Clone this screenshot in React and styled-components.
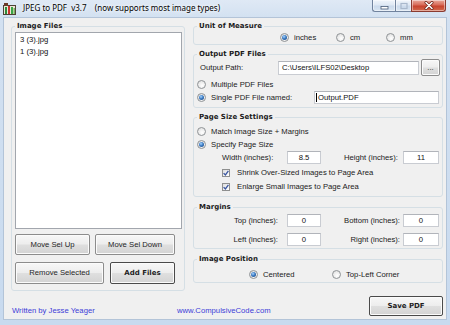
import React from "react";
import styled, { createGlobalStyle } from "styled-components";

const GlobalStyle = createGlobalStyle`
  html, body { margin: 0; padding: 0; background: #c9dbef; }
  body { font-family: "Liberation Sans", Arial, sans-serif; }
  * { box-sizing: border-box; }
`;

const Window = styled.div`
  width: 450px;
  height: 325px;
  display: flex;
  flex-direction: column;
  background: linear-gradient(180deg, #dfe9f5 0px, #d3e1f1 17px, #c8daef 100%);
  overflow: hidden;
`;

const TitleBar = styled.div`
  height: 17px;
  flex: none;
  display: flex;
  align-items: flex-start;
`;

const AppIcon = styled.svg`
  flex: none;
  margin: 3px 0 0 3px;
`;

const TitleText = styled.div`
  margin: 2px 0 0 7px;
  font-family: "Noto Sans", "Open Sans", sans-serif;
  font-size: 8px;
  line-height: 12px;
  color: #000;
  white-space: pre;
  text-shadow: 0 0 3px #fff, 0 0 5px #fff;
`;

const CaptionGroup = styled.div`
  margin-left: auto;
  margin-right: 4px;
  display: flex;
  height: 12px;
`;

const CapBtn = styled.div`
  width: ${(p) => p.$w}px;
  height: 12px;
  display: flex;
  align-items: center;
  justify-content: center;
  border: 1px solid ${(p) => (p.$close ? "#8a3b30" : "#71839e")};
  border-top: none;
  ${(p) => (p.$first ? "border-bottom-left-radius: 3px;" : "")}
  ${(p) => (p.$last ? "border-bottom-right-radius: 3px;" : "")}
  ${(p) => (p.$close ? "" : "border-right: none;")}
  background: ${(p) =>
    p.$close
      ? "linear-gradient(180deg, #e9aa9c 0%, #d86b58 45%, #c7432d 55%, #d36b4e 100%)"
      : "linear-gradient(180deg, #f0f5fb 0%, #dfe8f4 45%, #cbdaec 55%, #d9e5f2 100%)"};
  box-shadow: inset 0 0 0 1px rgba(255, 255, 255, 0.45);
`;

const Client = styled.div`
  flex: 1;
  margin: 0 3px 5px 3px;
  background: #f0f0f0;
  border: 1px solid #b3c4d8;
  display: grid;
  grid-template-columns: 174px 250px;
  grid-template-rows: 270px 1fr;
  column-gap: 8px;
  padding: 3px 3px 0 7px;
`;

const Group = styled.fieldset`
  margin: ${(p) => p.$mt || 0}px 0 0 0;
  padding: 0 ${(p) => (p.$pr === undefined ? 3 : p.$pr)}px 0 3px;
  height: ${(p) => p.$h}px;
  min-width: 0;
  border: 1px solid #d5dfe5;
  border-radius: 3px;
  display: flex;
  flex-direction: column;
  flex: none;
`;

const Legend = styled.legend`
  padding: 0 2px;
  margin: 0;
  font-family: "DejaVu Sans", Verdana, sans-serif;
  font-weight: bold;
  font-size: 7px;
  line-height: 10px;
  color: #1b1b1b;
`;

const ListBox = styled.div`
  margin-top: 1px;
  height: 197px;
  flex: none;
  background: #fff;
  border: 1px solid #a2a6ad;
  padding: 1px 0 0 4px;
`;

const ListItem = styled.div`
  font-size: 7.7px;
  line-height: 12px;
  color: #111;
`;

const Row = styled.div`
  display: flex;
  align-items: center;
  flex: none;
  margin-top: ${(p) => p.$mt || 0}px;
  padding-left: ${(p) => p.$pl || 0}px;
  height: ${(p) => p.$h}px;
  gap: ${(p) => p.$gap || 0}px;
`;

const Button = styled.button`
  width: ${(p) => p.$w}px;
  height: ${(p) => p.$h}px;
  flex: none;
  padding: 0;
  margin: 0;
  border: 1px solid ${(p) => (p.$default ? "#4a4a4a" : "#8c8c8c")};
  border-radius: 2px;
  background: linear-gradient(180deg, #f7f7f7 0%, #ededed 48%, #dfdfdf 52%, #d3d3d3 100%);
  box-shadow: inset 0 0 0 1px #fbfbfb;
  font-family: ${(p) => (p.$bold ? '"DejaVu Sans", Verdana, sans-serif' : '"Liberation Sans", Arial, sans-serif')};
  font-weight: ${(p) => (p.$bold ? "bold" : "normal")};
  font-size: ${(p) => (p.$bold ? 7 : 7.7)}px;
  color: #1e1e1e;
  line-height: 1;
`;

const Text = styled.span`
  font-size: 7.7px;
  line-height: 10px;
  color: #1a1a1a;
  white-space: nowrap;
  flex: none;
  width: ${(p) => (p.$w ? `${p.$w}px` : "auto")};
  text-align: ${(p) => p.$align || "left"};
  margin-left: ${(p) => p.$ml || 0}px;
  margin-right: ${(p) => p.$mr || 0}px;
`;

const Option = styled.div`
  display: flex;
  align-items: center;
  gap: ${(p) => p.$gap || 5}px;
  flex: none;
  width: ${(p) => (p.$w ? `${p.$w}px` : "auto")};
  height: 9px;
`;

const RadioDot = styled.span`
  width: 9px;
  height: 9px;
  flex: none;
  border-radius: 50%;
  border: 1px solid #8f9396;
  background: radial-gradient(circle at 60% 65%, #ffffff 0%, #f1f1f1 40%, #d8d8d8 100%);
  display: flex;
  align-items: center;
  justify-content: center;
  &::after {
    content: "";
    width: 5px;
    height: 5px;
    border-radius: 50%;
    background: ${(p) =>
      p.$on ? "radial-gradient(circle at 40% 35%, #a9d6ff 0%, #3b7bc4 45%, #1c3f6e 100%)" : "transparent"};
  }
`;

const CheckBox = styled.span`
  width: 8px;
  height: 8px;
  flex: none;
  border: 1px solid #8e8f8f;
  background: linear-gradient(135deg, #dcdcdc 0%, #f4f4f4 60%, #ffffff 100%);
  display: flex;
  align-items: center;
  justify-content: center;
`;

const TextBox = styled.div`
  width: ${(p) => p.$w}px;
  height: ${(p) => p.$h || 13}px;
  flex: none;
  background: #fff;
  border: 1px solid #c9ccd2;
  border-top-color: #b1b4ba;
  display: flex;
  align-items: center;
  justify-content: ${(p) => (p.$center ? "center" : "flex-start")};
  padding: 0 ${(p) => (p.$pad === undefined ? 3 : p.$pad)}px;
  font-size: 7.7px;
  color: #111;
  white-space: nowrap;
  overflow: hidden;
`;

const Caret = styled.span`
  width: 1px;
  height: 9px;
  background: #000;
  margin-right: 1px;
  flex: none;
`;

const RightCol = styled.div`
  display: flex;
  flex-direction: column;
`;

const Footer = styled.div`
  grid-column: 1 / -1;
  display: flex;
  align-items: flex-end;
  padding: 0 0 3px 1px;
`;

const FooterText = styled.span`
  font-size: 7.7px;
  line-height: 10px;
  color: #3c3cd8;
  white-space: nowrap;
  flex: none;
  width: ${(p) => (p.$w ? `${p.$w}px` : "auto")};
  margin-bottom: 0;
`;

const SaveWrap = styled.div`
  margin-left: auto;
  display: flex;
`;

function Radio({ on, label, w }) {
  return (
    <Option $w={w}>
      <RadioDot $on={on} />
      <Text>{label}</Text>
    </Option>
  );
}

function Check({ label }) {
  return (
    <Option $gap={7}>
      <CheckBox>
        <svg width="6" height="6" viewBox="0 0 6 6">
          <path d="M0.6 3.1 L2.4 4.9 L5.4 0.8" fill="none" stroke="#3a56a0" strokeWidth="1.3" />
        </svg>
      </CheckBox>
      <Text>{label}</Text>
    </Option>
  );
}

export default function App() {
  return (
    <>
      <GlobalStyle />
      <Window>
        <TitleBar>
          <AppIcon width="13" height="12" viewBox="0 0 13 12">
            <rect x="0.5" y="2.5" width="12" height="9" fill="#ece6d6" stroke="#4e4136" />
            <rect x="1" y="0" width="4" height="3" fill="#6a3a28" />
            <rect x="2" y="4" width="2" height="7" fill="#2e8c3a" />
            <rect x="5" y="3" width="2" height="8" fill="#c8352e" />
            <rect x="8" y="4" width="2" height="7" fill="#39a546" />
            <rect x="10.5" y="5" width="1.5" height="6" fill="#7ab060" />
          </AppIcon>
          <TitleText>{"JPEG to PDF  v3.7    (now supports most image types)"}</TitleText>
          <CaptionGroup>
            <CapBtn $w={23} $first>
              <svg width="9" height="8" viewBox="0 0 9 8">
                <rect x="1" y="4.5" width="7" height="2.5" fill="#fff" stroke="#4b5d78" strokeWidth="0.8" />
              </svg>
            </CapBtn>
            <CapBtn $w={16}>
              <svg width="8" height="8" viewBox="0 0 8 8">
                <rect x="1" y="1.5" width="6" height="5" fill="none" stroke="#a9b8cc" strokeWidth="1.2" />
              </svg>
            </CapBtn>
            <CapBtn $w={35} $close $last>
              <svg width="10" height="9" viewBox="0 0 10 9">
                <path d="M2 1.5 L8 7.5 M8 1.5 L2 7.5" stroke="#6b2418" strokeWidth="3" strokeLinecap="round" />
                <path d="M2 1.5 L8 7.5 M8 1.5 L2 7.5" stroke="#fff" strokeWidth="1.6" strokeLinecap="round" />
              </svg>
            </CapBtn>
          </CaptionGroup>
        </TitleBar>

        <Client>
          <Group $h={270} $pr={2}>
            <Legend>Image Files</Legend>
            <ListBox>
              <ListItem>3 (3).jpg</ListItem>
              <ListItem>1 (3).jpg</ListItem>
            </ListBox>
            <Row $mt={5} $gap={5}>
              <Button $w={75} $h={21}>Move Sel Up</Button>
              <Button $w={80} $h={21}>Move Sel Down</Button>
            </Row>
            <Row $mt={7} $gap={6}>
              <Button $w={89} $h={22}>Remove Selected</Button>
              <Button $w={65} $h={22} $bold $default>Add Files</Button>
            </Row>
          </Group>

          <RightCol>
            <Group $h={24}>
              <Legend>Unit of Measure</Legend>
              <Row $mt={2} $pl={83} $h={9}>
                <Radio on label="inches" w={56} />
                <Radio label="cm" w={50} />
                <Radio label="mm" />
              </Row>
            </Group>

            <Group $h={59} $mt={4}>
              <Legend>Output PDF Files</Legend>
              <Row $h={17}>
                <Text $w={78} $ml={3}>Output Path:</Text>
                <TextBox $w={141} $h={14}>{"C:\\Users\\ILFS02\\Desktop"}</TextBox>
                <Button $w={19} $h={17} style={{ marginLeft: 2 }}>...</Button>
              </Row>
              <Row $mt={4} $h={9}>
                <Radio label="Multiple PDF Files" />
              </Row>
              <Row $mt={2} $h={13}>
                <Radio on label="Single PDF File named:" w={117} />
                <TextBox $w={125} $pad={1}>
                  <Caret />
                  Output.PDF
                </TextBox>
              </Row>
            </Group>

            <Group $h={85} $mt={4}>
              <Legend>Page Size Settings</Legend>
              <Row $mt={5} $h={9}>
                <Radio label="Match Image Size + Margins" />
              </Row>
              <Row $mt={4} $h={9}>
                <Radio on label="Specify Page Size" />
              </Row>
              <Row $mt={2} $h={13} $pl={25}>
                <Text $w={65}>Width (inches):</Text>
                <TextBox $w={34} $center>8.5</TextBox>
                <Text $w={59} $ml={23}>Height (inches):</Text>
                <TextBox $w={36} $center>11</TextBox>
              </Row>
              <Row $mt={5} $h={8} $pl={25}>
                <Check label="Shrink Over-Sized Images to Page Area" />
              </Row>
              <Row $mt={6} $h={8} $pl={25}>
                <Check label="Enlarge Small Images to Page Area" />
              </Row>
            </Group>

            <Group $h={47} $mt={5}>
              <Legend>Margins</Legend>
              <Row $mt={2} $h={13}>
                <Text $w={81} $align="right" $mr={9}>Top (inches):</Text>
                <TextBox $w={34} $center>0</TextBox>
                <Text $w={79} $align="right" $mr={3}>Bottom (inches):</Text>
                <TextBox $w={36} $center>0</TextBox>
              </Row>
              <Row $mt={6} $h={13}>
                <Text $w={81} $align="right" $mr={9}>Left (inches):</Text>
                <TextBox $w={34} $center>0</TextBox>
                <Text $w={79} $align="right" $mr={3}>Right (inches):</Text>
                <TextBox $w={36} $center>0</TextBox>
              </Row>
            </Group>

            <Group $h={29} $mt={5}>
              <Legend>Image Position</Legend>
              <Row $mt={6} $h={9} $pl={52}>
                <Radio on label="Centered" w={83} />
                <Radio label="Top-Left Corner" />
              </Row>
            </Group>
          </RightCol>

          <Footer>
            <FooterText $w={165}>Written by Jesse Yeager</FooterText>
            <FooterText>www.CompulsiveCode.com</FooterText>
            <SaveWrap>
              <Button $w={74} $h={20} $bold $default>Save PDF</Button>
            </SaveWrap>
          </Footer>
        </Client>
      </Window>
    </>
  );
}
